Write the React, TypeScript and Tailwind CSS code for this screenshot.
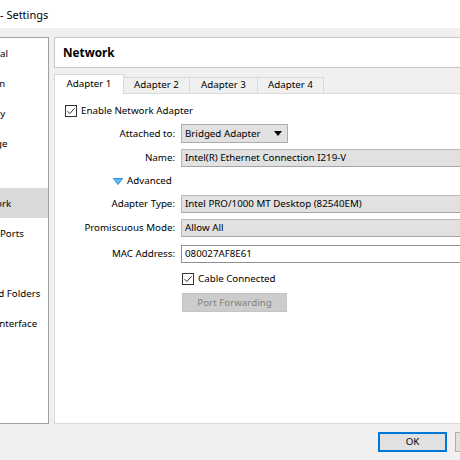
import React from "react";

const sidebarItems = [
  { label: "General", selected: false },
  { label: "System", selected: false },
  { label: "Display", selected: false },
  { label: "Storage", selected: false },
  { label: "Audio", selected: false },
  { label: "Network", selected: true },
  { label: "Serial Ports", selected: false },
  { label: "USB", selected: false },
  { label: "Shared Folders", selected: false },
  { label: "User Interface", selected: false },
];

const tabs = [
  { label: "Adapter 1", width: "w-[70px]", active: true },
  { label: "Adapter 2", width: "w-[67px]", active: false },
  { label: "Adapter 3", width: "w-[69px]", active: false },
  { label: "Adapter 4", width: "w-[67px]", active: false },
];

function CheckBox() {
  return (
    <svg width="12" height="12" viewBox="0 0 12 12" className="shrink-0">
      <rect x="0.5" y="0.5" width="11" height="11" fill="#fff" stroke="#333" />
      <path d="M2.5 6.2 L4.8 8.6 L9.6 3.2" fill="none" stroke="#333" strokeWidth="1" />
    </svg>
  );
}

function ReadOnlyField({ value }: { value: string }) {
  return (
    <div className="flex h-[18px] items-center border border-[#b9b9b9] border-b-[#a5a5a5] bg-[#e1e1e1] pl-[3px] pt-px text-black">
      {value}
    </div>
  );
}

export default function App() {
  return (
    <div
      className="h-[460px] w-[460px] overflow-hidden bg-[#f0f0f0] text-[9.75px] text-black"
      style={{ fontFamily: '"Noto Sans", "Open Sans", sans-serif' }}
    >
      <div className="flex h-[28px] items-center bg-white pt-[2px] text-[11px]">- Settings</div>

      <div className="flex pt-[9px]">
        <aside className="h-[387px] w-[49px] shrink-0 overflow-hidden border-y border-r border-[#a0a0a0] bg-white">
          <ul>
            {sidebarItems.map((item) => (
              <li
                key={item.label}
                className={`flex h-[30px] items-center whitespace-nowrap pt-[2px] ${item.selected ? "bg-[#d9d9d9]" : ""}`}
              >
                <span className="ml-[-28px]">{item.label}</span>
              </li>
            ))}
          </ul>
        </aside>

        <main className="ml-[5px] w-[420px] shrink-0">
          <div className="flex h-[31px] items-center border border-[#c8c8c8] bg-white pl-[8px] pt-px text-[11.75px] font-bold">
            Network
          </div>

          <div className="mt-[6px] flex h-[19px] items-end">
            {tabs.map((tab, i) => (
              <div
                key={tab.label}
                className={`relative flex items-center justify-center border border-b-0 border-[#d9d9d9] ${tab.width} ${
                  i > 0 ? "-ml-px" : ""
                } ${tab.active ? "z-10 -mb-px h-[20px] bg-white" : "h-[16px] bg-[#f0f0f0]"}`}
              >
                {tab.label}
              </div>
            ))}
          </div>

          <section className="h-[331px] border border-[#d9d9d9] bg-white pt-[11px]">
            <div className="flex h-[12px] items-center gap-[4px] pl-[10px]">
              <CheckBox />
              <span className="pt-px">Enable Network Adapter</span>
            </div>

            <div className="mt-[7px] grid grid-cols-[120px_1fr] gap-x-[6px]">
              <div className="flex h-[19px] items-center justify-end pt-px">Attached to:</div>
              <div className="flex h-[19px] w-[107px] items-center justify-between border border-[#adadad] bg-[#e1e1e1] pl-[3px] pr-[5px]">
                <span className="pt-px">Bridged Adapter</span>
                <svg width="8" height="5" viewBox="0 0 8 5">
                  <polygon points="0,0 8,0 4,5" fill="#000" />
                </svg>
              </div>
            </div>

            <div className="mt-[6px] grid grid-cols-[120px_1fr] gap-x-[6px]">
              <div className="flex h-[18px] items-center justify-end pt-px">Name:</div>
              <ReadOnlyField value="Intel(R) Ethernet Connection I219-V" />
            </div>

            <div className="mt-[5px] flex h-[18px] items-center pl-[58px]">
              <svg width="10" height="7" viewBox="0 0 10 7" className="mr-[4px]">
                <polygon points="0.5,0.5 9.5,0.5 5,6.5" fill="#5cbdf5" stroke="#2d8fd6" strokeWidth="1" strokeLinejoin="round" />
              </svg>
              <span className="pt-px">Advanced</span>
            </div>

            <div className="mt-[5px] grid grid-cols-[120px_1fr] gap-x-[6px]">
              <div className="flex h-[18px] items-center justify-end pt-px">Adapter Type:</div>
              <ReadOnlyField value="Intel PRO/1000 MT Desktop (82540EM)" />
            </div>

            <div className="mt-[6px] grid grid-cols-[120px_1fr] gap-x-[6px]">
              <div className="flex h-[18px] items-center justify-end pt-px">Promiscuous Mode:</div>
              <ReadOnlyField value="Allow All" />
            </div>

            <div className="mt-[8px] grid grid-cols-[120px_1fr] gap-x-[6px]">
              <div className="flex h-[18px] items-center justify-end pt-px">MAC Address:</div>
              <div className="flex h-[18px] items-center border border-[#8f8f8f] bg-white pl-[3px] pt-px">080027AF8E61</div>
            </div>

            <div className="mt-[10px] grid grid-cols-[120px_1fr] gap-x-[6px]">
              <div />
              <div className="ml-[1px] flex h-[12px] items-center gap-[4px]">
                <CheckBox />
                <span className="pt-px">Cable Connected</span>
              </div>
            </div>

            <div className="mt-[8px] grid grid-cols-[120px_1fr] gap-x-[6px]">
              <div />
              <div className="ml-[1px] flex h-[19px] w-[105px] items-center justify-center border border-[#c4c4c4] bg-[#cccccc] pt-px text-[#838383]">
                Port Forwarding
              </div>
            </div>
          </section>
        </main>
      </div>

      <div className="mt-[8px] flex gap-[8px] pl-[378px]">
        <button className="flex h-[20px] w-[69px] shrink-0 items-center justify-center border-2 border-[#0078d7] bg-[#e1e1e1] pt-px">
          OK
        </button>
        <button className="flex h-[20px] w-[75px] shrink-0 items-center justify-center border border-[#adadad] bg-[#e1e1e1] pt-px">
          Cancel
        </button>
      </div>
    </div>
  );
}
